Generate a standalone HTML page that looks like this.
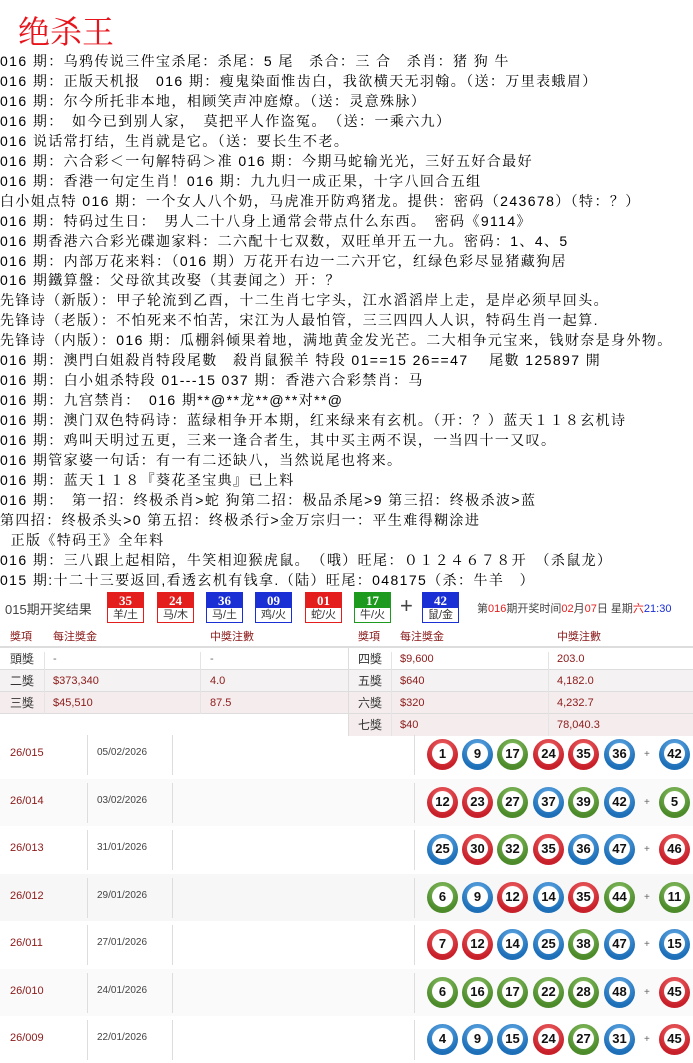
<!DOCTYPE html>
<html><head><meta charset="utf-8">
<style>
*{margin:0;padding:0;box-sizing:border-box}
body{width:693px;height:1055px;background:#fff;position:relative;overflow:hidden;font-family:"Liberation Sans","Noto Sans CJK SC",sans-serif;}
.title{position:absolute;left:18px;top:12px;font-size:32px;color:#e8141c;font-family:"Liberation Serif","Noto Serif CJK SC",serif;line-height:40px}
.txt{position:absolute;left:0;top:52px;font-size:14px;line-height:19.95px;color:#000;white-space:pre;font-family:"Liberation Sans","Noto Serif CJK SC",serif;letter-spacing:1.4px}
.hd{position:absolute;top:590px;left:0;width:693px;height:34px}
.bx{position:absolute;top:2px;width:37px;height:31px;border:1px solid}
.bx .n{height:15px;color:#fff;font-weight:bold;font-size:13px;text-align:center;line-height:15px;font-family:"Liberation Serif",serif}
.bx .z{height:15px;font-size:11px;text-align:center;line-height:15px;color:#333}
.R{border-color:#e41d1d}.R .n{background:#e41d1d}
.U{border-color:#1a2fd4}.U .n{background:#1a2fd4}
.G{border-color:#1e9a1e}.G .n{background:#1e9a1e}
.pt{position:absolute;left:0;top:626px;width:693px;font-size:11px}
.pr{position:absolute;left:0;width:693px;height:22px}
.c{position:absolute;top:0;line-height:22px;color:#8b1a1a}
.k{color:#333;font-size:12px}
.row{position:absolute;left:0;width:693px;height:47px}
.row .id{position:absolute;left:10px;top:16px;font-size:11px;color:#8b1a1a}
.row .dt{position:absolute;left:97px;top:16px;font-size:10px;color:#444}
.row .s{position:absolute;top:4px;width:1px;height:40px;background:#ddd}
.b{position:absolute;top:8px;width:31px;height:31px;border-radius:50%;}
.b i{position:absolute;left:5px;top:4px;width:21px;height:21px;border-radius:50%;background:#fff;font-style:normal;font-weight:bold;font-size:13px;text-align:center;line-height:21px;color:#111}
.r{background:radial-gradient(circle at 50% 30%,#f26a6a,#c8202a 70%)}
.u{background:radial-gradient(circle at 50% 30%,#6ab0ea,#1d6fb8 70%)}
.g{background:radial-gradient(circle at 50% 30%,#8fc56a,#4c8a2a 70%)}
.p{position:absolute;top:18px;left:644px;font-size:10px;color:#666}
</style></head><body>
<div class="title">绝杀王</div>
<div class="txt">016 期：乌鸦传说三件宝杀尾：杀尾：5 尾　杀合：三 合　杀肖：猪 狗 牛
016 期：正版天机报　016 期：瘦鬼染面惟齿白，我欲横天无羽翰。（送：万里表蛾眉）
016 期：尔今所托非本地，相顾笑声冲庭燎。（送：灵意殊脉）
016 期：　如今已到别人家，　莫把平人作盗冤。　（送：一乘六九）
016 说话常打结，生肖就是它。（送：要长生不老。
016 期：六合彩＜一句解特码＞准 016 期：今期马蛇输光光，三好五好合最好
016 期：香港一句定生肖！016 期：九九归一成正果，十字八回合五组
白小姐点特 016 期：一个女人八个奶，马虎准开防鸡猪龙。提供：密码（243678）（特：？）
016 期：特码过生日：　男人二十八身上通常会带点什么东西。　密码《9114》
016 期香港六合彩光碟迦家料：二六配十七双数，双旺单开五一九。密码：1、4、5
016 期：内部万花来料：（016 期）万花开右边一二六开它，红绿色彩尽显猪藏狗居
016 期鐵算盤：父母欲其改娶（其妻闻之）开：？
先锋诗（新版）：甲子轮流到乙酉，十二生肖七字头，江水滔滔岸上走，是岸必须早回头。
先锋诗（老版）：不怕死来不怕苦，宋江为人最怕管，三三四四人人识，特码生肖一起算.
先锋诗（内版）：016 期：瓜棚斜倾果着地，满地黄金发光芒。二大相争元宝来，钱财奈是身外物。
016 期：澳門白姐殺肖特段尾數　殺肖鼠猴羊 特段 01==15 26==47　 尾數 125897 開
016 期：白小姐杀特段 01---15 037 期：香港六合彩禁肖：马
016 期：九宫禁肖：　016 期**@**龙**@**对**@
016 期：澳门双色特码诗：蓝绿相争开本期，红来绿来有玄机。（开：？）蓝天１１８玄机诗
016 期：鸡叫天明过五更，三来一逢合者生，其中买主两不误，一当四十一又叹。
016 期管家婆一句话：有一有二还缺八，当然说尾也将来。
016 期：蓝天１１８『葵花圣宝典』已上料
016 期：　第一招：终极杀肖&gt;蛇 狗第二招：极品杀尾&gt;9 第三招：终极杀波&gt;蓝
第四招：终极杀头&gt;0 第五招：终极杀行&gt;金万宗归一：平生难得糊涂进
  正版《特码王》全年料
016 期：三八跟上起相陪，牛笑相迎猴虎鼠。　（哦）旺尾：０１２４６７８开　（杀鼠龙）
015 期:十二十三要返回,看透玄机有钱拿.（陆）旺尾：048175（杀：牛羊　）</div>

<div class="hd">
<div style="position:absolute;left:5px;top:9px;font-size:13px;color:#444">015期开奖结果</div>
<div class="bx R" style="left:107px"><div class="n">35</div><div class="z">羊/土</div></div>
<div class="bx R" style="left:157px"><div class="n">24</div><div class="z">马/木</div></div>
<div class="bx U" style="left:206px"><div class="n">36</div><div class="z">马/土</div></div>
<div class="bx U" style="left:255px"><div class="n">09</div><div class="z">鸡/火</div></div>
<div class="bx R" style="left:305px"><div class="n">01</div><div class="z">蛇/火</div></div>
<div class="bx G" style="left:354px"><div class="n">17</div><div class="z">牛/火</div></div>
<div style="position:absolute;left:400px;top:3px;font-size:22px;color:#444">+</div>
<div class="bx U" style="left:422px"><div class="n">42</div><div class="z">鼠/金</div></div>
<div style="position:absolute;left:477px;top:10px;font-size:11px;color:#444;white-space:nowrap">第<span style="color:#e41d1d">016</span>期开奖时间<span style="color:#e41d1d">02</span>月<span style="color:#e41d1d">07</span>日 星期<span style="color:#e41d1d">六</span><span style="color:#1a2fd4">21:30</span></div>
</div>

<div class="pt">
<div class="pr" style="top:0;border-bottom:2px solid #ddd"><span class="c" style="left:10px">獎項</span><span class="c" style="left:53px">每注獎金</span><span class="c" style="left:210px">中獎注數</span><span class="c" style="left:358px">獎項</span><span class="c" style="left:400px">每注獎金</span><span class="c" style="left:557px">中獎注數</span></div>
<div class="pr" style="top:22px;border-bottom:1px solid #ddd"><span class="c k" style="left:10px">頭獎</span><span class="c" style="left:53px;color:#666">-</span><span class="c" style="left:210px;color:#666">-</span><span class="c k" style="left:358px">四獎</span><span class="c" style="left:400px">$9,600</span><span class="c" style="left:557px">203.0</span></div>
<div class="pr" style="top:44px;background:#f4f2f2;border-bottom:1px solid #ddd"><span class="c k" style="left:10px">二獎</span><span class="c" style="left:53px">$373,340</span><span class="c" style="left:210px">4.0</span><span class="c k" style="left:358px">五獎</span><span class="c" style="left:400px">$640</span><span class="c" style="left:557px">4,182.0</span></div>
<div class="pr" style="top:66px;background:#f5eded;border-bottom:1px solid #ddd"><span class="c k" style="left:10px">三獎</span><span class="c" style="left:53px">$45,510</span><span class="c" style="left:210px">87.5</span><span class="c k" style="left:358px">六獎</span><span class="c" style="left:400px">$320</span><span class="c" style="left:557px">4,232.7</span></div>
<div class="pr" style="top:88px"><div style="position:absolute;left:348px;top:0;width:345px;height:22px;background:#f5eded"></div><span class="c k" style="left:358px">七獎</span><span class="c" style="left:400px">$40</span><span class="c" style="left:557px">78,040.3</span></div>
<div style="position:absolute;left:348px;top:22px;width:1px;height:88px;background:#ddd"></div>
<div style="position:absolute;left:44px;top:26px;width:1px;height:62px;background:#e4e4e4"></div>
<div style="position:absolute;left:200px;top:26px;width:1px;height:62px;background:#e4e4e4"></div>
<div style="position:absolute;left:391px;top:26px;width:1px;height:84px;background:#e4e4e4"></div>
<div style="position:absolute;left:548px;top:26px;width:1px;height:84px;background:#e4e4e4"></div>
</div>

<div class="row" style="top:731px"><span class="id">26/015</span><span class="dt">05/02/2026</span><span class="s" style="left:87px"></span><span class="s" style="left:172px"></span><span class="s" style="left:414px"></span>
<span class="b r" style="left:427px"><i>1</i></span><span class="b u" style="left:462px"><i>9</i></span><span class="b g" style="left:497px"><i>17</i></span><span class="b r" style="left:533px"><i>24</i></span><span class="b r" style="left:568px"><i>35</i></span><span class="b u" style="left:604px"><i>36</i></span><span class="p">+</span><span class="b u" style="left:659px"><i>42</i></span></div>

<div class="row" style="top:779px;background:#fafafa"><span class="id">26/014</span><span class="dt">03/02/2026</span><span class="s" style="left:87px"></span><span class="s" style="left:172px"></span><span class="s" style="left:414px"></span>
<span class="b r" style="left:427px"><i>12</i></span><span class="b r" style="left:462px"><i>23</i></span><span class="b g" style="left:497px"><i>27</i></span><span class="b u" style="left:533px"><i>37</i></span><span class="b g" style="left:568px"><i>39</i></span><span class="b u" style="left:604px"><i>42</i></span><span class="p">+</span><span class="b g" style="left:659px"><i>5</i></span></div>

<div class="row" style="top:826px"><span class="id">26/013</span><span class="dt">31/01/2026</span><span class="s" style="left:87px"></span><span class="s" style="left:172px"></span><span class="s" style="left:414px"></span>
<span class="b u" style="left:427px"><i>25</i></span><span class="b r" style="left:462px"><i>30</i></span><span class="b g" style="left:497px"><i>32</i></span><span class="b r" style="left:533px"><i>35</i></span><span class="b u" style="left:568px"><i>36</i></span><span class="b u" style="left:604px"><i>47</i></span><span class="p">+</span><span class="b r" style="left:659px"><i>46</i></span></div>

<div class="row" style="top:874px;background:#f7f7f7"><span class="id">26/012</span><span class="dt">29/01/2026</span><span class="s" style="left:87px"></span><span class="s" style="left:172px"></span><span class="s" style="left:414px"></span>
<span class="b g" style="left:427px"><i>6</i></span><span class="b u" style="left:462px"><i>9</i></span><span class="b r" style="left:497px"><i>12</i></span><span class="b u" style="left:533px"><i>14</i></span><span class="b r" style="left:568px"><i>35</i></span><span class="b g" style="left:604px"><i>44</i></span><span class="p">+</span><span class="b g" style="left:659px"><i>11</i></span></div>

<div class="row" style="top:921px"><span class="id">26/011</span><span class="dt">27/01/2026</span><span class="s" style="left:87px"></span><span class="s" style="left:172px"></span><span class="s" style="left:414px"></span>
<span class="b r" style="left:427px"><i>7</i></span><span class="b r" style="left:462px"><i>12</i></span><span class="b u" style="left:497px"><i>14</i></span><span class="b u" style="left:533px"><i>25</i></span><span class="b g" style="left:568px"><i>38</i></span><span class="b u" style="left:604px"><i>47</i></span><span class="p">+</span><span class="b u" style="left:659px"><i>15</i></span></div>

<div class="row" style="top:969px;background:#fafafa"><span class="id">26/010</span><span class="dt">24/01/2026</span><span class="s" style="left:87px"></span><span class="s" style="left:172px"></span><span class="s" style="left:414px"></span>
<span class="b g" style="left:427px"><i>6</i></span><span class="b g" style="left:462px"><i>16</i></span><span class="b g" style="left:497px"><i>17</i></span><span class="b g" style="left:533px"><i>22</i></span><span class="b g" style="left:568px"><i>28</i></span><span class="b u" style="left:604px"><i>48</i></span><span class="p">+</span><span class="b r" style="left:659px"><i>45</i></span></div>

<div class="row" style="top:1016px"><span class="id">26/009</span><span class="dt">22/01/2026</span><span class="s" style="left:87px"></span><span class="s" style="left:172px"></span><span class="s" style="left:414px"></span>
<span class="b u" style="left:427px"><i>4</i></span><span class="b u" style="left:462px"><i>9</i></span><span class="b u" style="left:497px"><i>15</i></span><span class="b r" style="left:533px"><i>24</i></span><span class="b g" style="left:568px"><i>27</i></span><span class="b u" style="left:604px"><i>31</i></span><span class="p">+</span><span class="b r" style="left:659px"><i>45</i></span></div>
</body></html>
